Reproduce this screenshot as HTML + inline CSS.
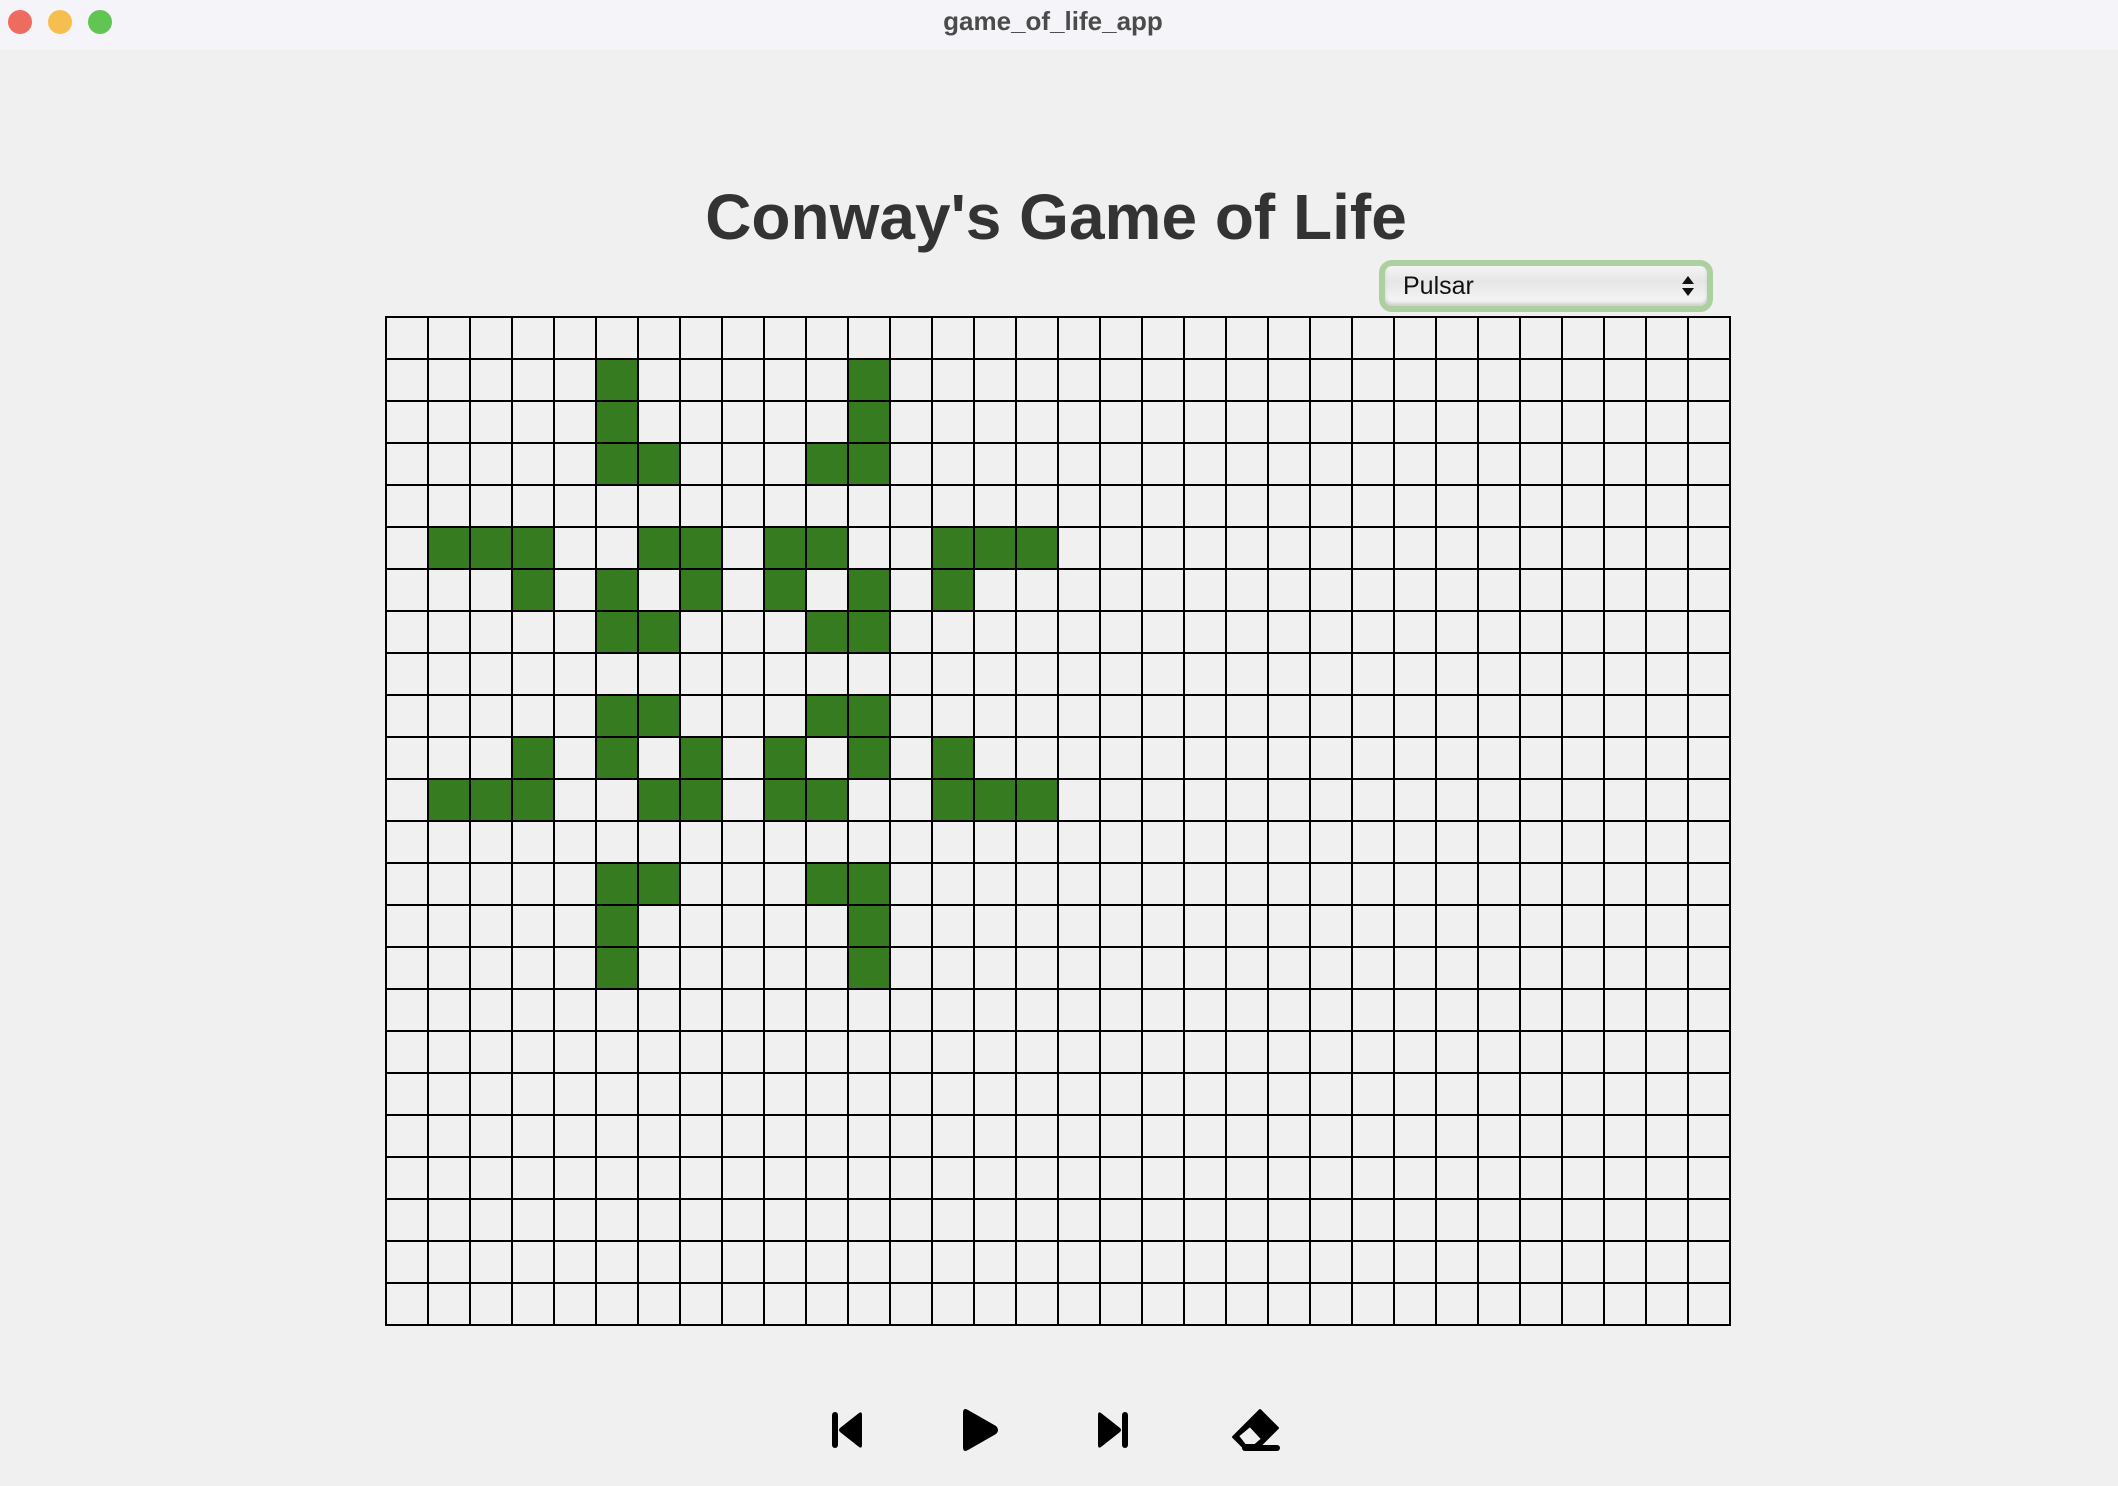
<!DOCTYPE html>
<html><head><meta charset="utf-8"><style>
html,body{margin:0;padding:0;}
body{width:2118px;height:1486px;background:#f0f0f0;position:relative;overflow:hidden;font-family:"Liberation Sans",Arial,sans-serif;}
.tb{position:absolute;left:0;top:0;width:2118px;height:50px;background:#f5f5f9;}
.tl{position:absolute;top:10px;width:24px;height:24px;border-radius:50%;}
.tt{position:absolute;top:0;left:-6px;width:2118px;line-height:42px;text-align:center;font-size:26px;font-weight:bold;color:#4b4b4b;}
h1{position:absolute;top:172px;left:0;width:2112px;margin:0;text-align:center;font-size:64px;font-weight:bold;color:#333;line-height:90px;}
.sel{position:absolute;left:1379px;top:260px;width:322px;height:40px;border:6px solid #acd0a0;border-radius:13px;background:linear-gradient(#f4f4f4,#e6e6e6 40%,#f8f8f8);box-shadow:inset 0 -3px 3px #d0d0d0;}
.sel span{position:absolute;left:18px;top:6px;font-size:25px;color:#111;}
.grid{position:absolute;left:385px;top:316px;width:1346px;height:1010px;
background-image:repeating-linear-gradient(to right,#000 0 2px,transparent 2px 42px),repeating-linear-gradient(to bottom,#000 0 2px,transparent 2px 42px);}
.c{position:absolute;width:40px;height:40px;background:#377b21;}
svg{position:absolute;}
</style></head><body>
<div class="tb"></div>
<div class="tl" style="left:8px;background:#ee6b60;"></div>
<div class="tl" style="left:48px;background:#f5bf4f;"></div>
<div class="tl" style="left:88px;background:#61c554;"></div>
<div class="tt">game_of_life_app</div>
<h1>Conway's Game of Life</h1>
<div class="sel"><span>Pulsar</span>
<svg style="left:296px;top:8px" width="14" height="24" viewBox="0 0 14 24"><path d="M7 2L13 10H1Z M7 22L13 14H1Z" fill="#111"/></svg></div>
<div class="grid" id="g"></div>
<script>
var live={1:[5,11],2:[5,11],3:[5,6,10,11],5:[1,2,3,6,7,9,10,13,14,15],6:[3,5,7,9,11,13],7:[5,6,10,11],9:[5,6,10,11],10:[3,5,7,9,11,13],11:[1,2,3,6,7,9,10,13,14,15],13:[5,6,10,11],14:[5,11],15:[5,11]};
var g=document.getElementById('g'),h='';
for(var r in live){live[r].forEach(function(c){h+='<div class="c" style="left:'+(2+42*c)+'px;top:'+(2+42*r)+'px"></div>';});}
g.innerHTML=h;
</script>
<svg style="left:826px;top:1406px" width="42" height="48" viewBox="0 0 42 48"><rect x="6" y="6" width="6" height="36" rx="3" fill="#000"/><path d="M36 9 Q36 5 33 7 L14 22 Q12 24 14 26 L33 41 Q36 43 36 39Z" fill="#000"/></svg>
<svg style="left:958px;top:1405px" width="46" height="50" viewBox="0 0 46 50"><path d="M5 8 Q5 2 10 5 L38 21 Q42 25 38 29 L10 45 Q5 48 5 42Z" fill="#000"/></svg>
<svg style="left:1092px;top:1406px" width="42" height="48" viewBox="0 0 42 48"><rect x="30" y="6" width="6" height="36" rx="3" fill="#000"/><path d="M6 9 Q6 5 9 7 L28 22 Q30 24 28 26 L9 41 Q6 43 6 39Z" fill="#000"/></svg>
<svg style="left:1226px;top:1405px" width="58" height="50" viewBox="0 0 58 50"><path fill-rule="evenodd" fill="#000" stroke="#000" stroke-width="2" stroke-linejoin="round" d="M34 5 L52 23 L32 43 L18 43 L7 32 Z M12 31 L24 21 L36 34 L29 40 L19 40 Z"/><path d="M19 43 H51" stroke="#000" stroke-width="6" stroke-linecap="round"/></svg>
</body></html>
